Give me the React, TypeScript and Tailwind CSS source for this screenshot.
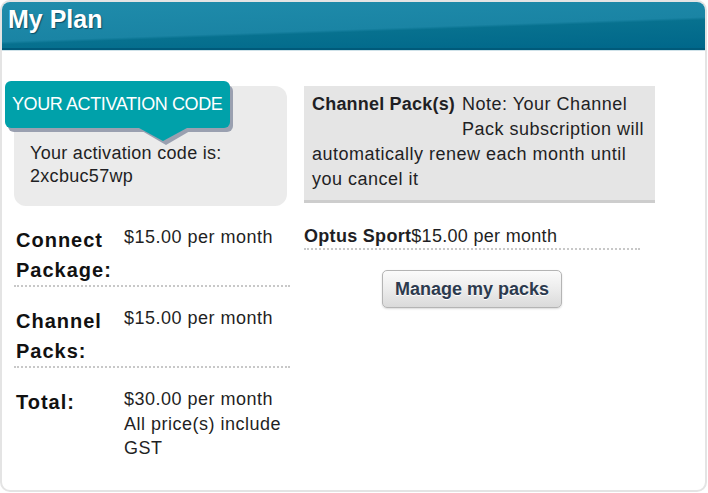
export default function App() {
  return (
    <div className="w-[708px] h-[493px] bg-white font-['Liberation_Sans',Arial,sans-serif] text-[#1f1f24]">
      <div className="w-[707px] h-[492px] rounded-[10px] border-2 border-[#e4e4e4] overflow-hidden">
        {/* Header */}
        <div className="h-[48px] border-b-2 border-[#005a7a] bg-[linear-gradient(178deg,#1f8cab_0%,#1a84a4_56%,#07718f_60%,#00678a_100%)] pl-[6px] pt-[3px]">
          <h1 className="text-[25px] leading-[28px] font-bold text-white [text-shadow:1px_1px_1px_rgba(0,40,60,0.6)]">My Plan</h1>
        </div>
        <div className="h-px bg-[#cfe2e9]" />

        <div className="flex pl-[12px] pt-[35px]">
          {/* Left column */}
          <div className="w-[276px]">
            <div className="relative w-[273px] rounded-[12px] bg-[#ebebeb] pl-[16px] pt-[56px] pb-[18px] text-[18px] leading-[23px] tracking-[0.3px]">
              <div className="absolute left-[-9px] top-[-5px]">
                <div className="relative">
                  <div className="w-[225px] h-[47px] rounded-[6px] bg-[#00a1aa] shadow-[3px_4px_0_#9aa0b0] flex items-center pl-[7px] text-white text-[18px] tracking-[-0.4px]">
                    YOUR ACTIVATION CODE
                  </div>
                  <div className="absolute left-[137px] top-[47px] w-0 h-0 border-l-[24px] border-r-[24px] border-t-[14px] border-l-transparent border-r-transparent border-t-[#9aa0b0] translate-y-[3px]" />
                  <div className="absolute left-[134px] top-[47px] w-0 h-0 border-l-[24px] border-r-[24px] border-t-[13px] border-l-transparent border-r-transparent border-t-[#00a1aa]" />
                </div>
              </div>
              <p>Your activation code is:</p>
              <p>2xcbuc57wp</p>
            </div>

            <div className="mt-[19px]">
              <div className="flex border-b-2 border-dotted border-[#c8c8c8]">
                <div className="w-[110px] pl-[2px] text-[20px] leading-[30px] font-bold tracking-[1px] text-[#111]">Connect Package:</div>
                <div className="text-[18px] leading-[24px] tracking-[0.5px]">$15.00 per month</div>
              </div>
              <div className="flex border-b-2 border-dotted border-[#c8c8c8] mt-[19px]">
                <div className="w-[110px] pl-[2px] text-[20px] leading-[30px] font-bold tracking-[1px] text-[#111]">Channel Packs:</div>
                <div className="text-[18px] leading-[24px] tracking-[0.5px]">$15.00 per month</div>
              </div>
              <div className="flex mt-[19px]">
                <div className="w-[110px] pl-[2px] text-[20px] leading-[30px] font-bold tracking-[1px] text-[#111]">Total:</div>
                <div className="w-[165px] text-[18px] leading-[24.5px] tracking-[0.5px]">
                  $30.00 per month
                  <br />
                  All price(s) include GST
                </div>
              </div>
            </div>
          </div>

          {/* Right column */}
          <div className="ml-[14px] w-[351px]">
            <div className="bg-[#e5e5e5] border-b-[3px] border-[#cdcdcd] pl-[8px] pr-[6px] pt-[6px] pb-[8px] text-[18px] leading-[25px] tracking-[0.5px]">
              <div className="flex">
                <span className="mr-[7px] font-bold tracking-[0.2px]">Channel Pack(s)</span>
                <span>
                  Note: Your Channel
                  <br />
                  Pack subscription will
                </span>
              </div>
              <p>
                automatically renew each month until
                <br />
                you cancel it
              </p>
            </div>

            <div className="w-[336px] mt-[21px]">
              <div className="border-b-2 border-dotted border-[#c8c8c8] text-[18px] leading-[24px] tracking-[0.3px]">
                <span className="font-bold">Optus Sport</span>$15.00 per month
              </div>
              <div className="flex justify-center mt-[20px]">
                <button className="w-[180px] h-[38px] rounded-[5px] border border-[#b4b4b4] bg-[linear-gradient(180deg,#fbfbfb_0%,#ececec_50%,#dadada_100%)] shadow-[0_1px_2px_rgba(0,0,0,0.15)] text-[18px] font-bold text-[#2c3a4e] [text-shadow:0_1px_0_#fff]">
                  Manage my packs
                </button>
              </div>
            </div>
          </div>
        </div>
      </div>
    </div>
  );
}
